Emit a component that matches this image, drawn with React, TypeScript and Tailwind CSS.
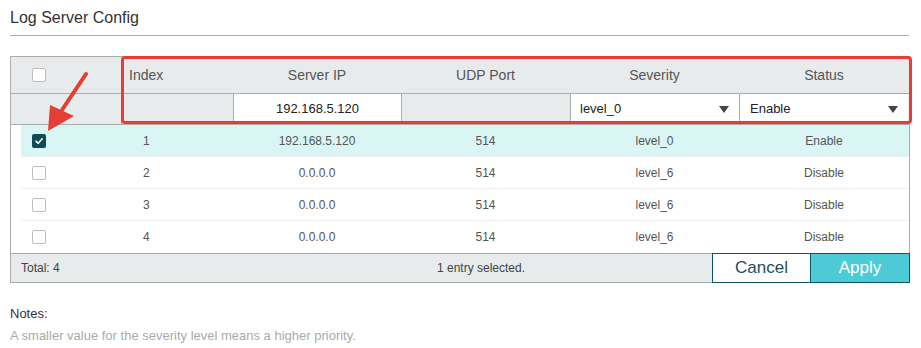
import React from "react";

const Check = ({ checked }: { checked?: boolean }) =>
  checked ? (
    <div className="w-[14px] h-[14px] rounded-[2px] bg-[#0e4a5a] flex items-center justify-center">
      <svg width="10" height="10" viewBox="0 0 10 10">
        <path d="M2 5.2 L4.2 7.3 L8.2 2.8" stroke="#fff" strokeWidth="1.6" fill="none" strokeLinecap="round" strokeLinejoin="round" />
      </svg>
    </div>
  ) : (
    <div className="w-[14px] h-[14px] rounded-[2px] border border-[#bdbdbd] bg-white" />
  );

const Tri = () => (
  <svg width="10" height="7" viewBox="0 0 10 7">
    <path d="M0 0 L10 0 L5 7 Z" fill="#444" />
  </svg>
);

const rows = [
  { i: "1", ip: "192.168.5.120", port: "514", sev: "level_0", st: "Enable", sel: true },
  { i: "2", ip: "0.0.0.0", port: "514", sev: "level_6", st: "Disable" },
  { i: "3", ip: "0.0.0.0", port: "514", sev: "level_6", st: "Disable" },
  { i: "4", ip: "0.0.0.0", port: "514", sev: "level_6", st: "Disable" },
];

export default function App() {
  return (
    <div className="relative w-[921px] h-[348px] bg-white font-['Liberation_Sans',Arial,sans-serif] overflow-hidden">
      <div className="ml-[10px] w-[899px] h-[36px] border-b border-[#acacac] flex items-center text-[16px] text-[#333]">
        Log Server Config
      </div>

      <div className="ml-[10px] mt-[20px] w-[900px] border-l border-r border-[#acacac]">
        {/* header */}
        <div className="border-t border-[#acacac] bg-[#e8ebec] text-[#555] text-[14px]">
          <div className="flex h-[37px] items-center border-b border-[#acacac]">
            <div className="w-[110px] pl-[21px] flex items-center">
              <Check />
            </div>
            <div className="w-[112px] pl-[8px]">Index</div>
            <div className="w-[168px] text-center">Server IP</div>
            <div className="w-[169px] text-center">UDP Port</div>
            <div className="w-[169px] text-center">Severity</div>
            <div className="w-[170px] text-center">Status</div>
          </div>
          <div className="flex h-[31px] border-b border-[#acacac] text-[13px] text-[#222]">
            <div className="w-[110px]" />
            <div className="w-[112px] border-l border-[#acacac]" />
            <div className="w-[168px] border-l border-[#acacac] bg-white flex items-center justify-center">192.168.5.120</div>
            <div className="w-[169px] border-l border-[#acacac]" />
            <div className="w-[169px] border-l border-[#acacac] bg-white flex items-center justify-between pl-[9px] pr-[10px]">
              <span>level_0</span>
              <Tri />
            </div>
            <div className="w-[169px] border-l border-[#acacac] bg-white flex items-center justify-between pl-[10px] pr-[10px]">
              <span>Enable</span>
              <Tri />
            </div>
          </div>
        </div>

        {/* rows */}
        <div className="pl-[10px] text-[12px] text-[#555]">
          {rows.map((r, k) => (
            <div
              key={k}
              className={`flex h-[32px] items-center ${k < 3 ? "border-b border-[#eeeeee]" : ""} ${r.sel ? "bg-[#d9f5f4]" : ""}`}
            >
              <div className="w-[100px] pl-[11px] flex items-center">
                <Check checked={r.sel} />
              </div>
              <div className="w-[112px] pl-[22px]">{r.i}</div>
              <div className="w-[168px] text-center">{r.ip}</div>
              <div className="w-[169px] text-center">{r.port}</div>
              <div className="w-[169px] text-center">{r.sev}</div>
              <div className="w-[170px] text-center">{r.st}</div>
            </div>
          ))}
        </div>

        {/* footer */}
        <div className="flex h-[30px] border-t border-b border-[#acacac] bg-[#e8ebec] text-[12px] text-[#444]">
          <div className="flex-1 flex items-center pl-[10px]">
            <span className="w-[416px]">Total: 4</span>
            <span>1 entry selected.</span>
          </div>
          <div className="w-[99px] -my-[1px] border border-[#0f5566] bg-white flex items-center justify-center text-[17px] text-[#1f4e5a]">
            Cancel
          </div>
          <div className="w-[99px] -my-[1px] -mr-[1px] border border-l-0 border-[#0f5566] bg-[#4ccbd6] flex items-center justify-center text-[17px] text-white">
            Apply
          </div>
        </div>
      </div>

      <div className="mt-[23px] ml-[10px] text-[13px] leading-[16px] text-[#333]">Notes:</div>
      <div className="mt-[6px] ml-[10px] text-[13px] leading-[16px] text-[#aaa]">
        A smaller value for the severity level means a higher priority.
      </div>

      {/* annotation overlay */}
      <div className="absolute left-[121px] top-[56px] w-[791px] h-[68px] border-[3px] border-[#e53e35] rounded-[4px]" />
      <svg className="absolute left-0 top-0" width="921" height="348" viewBox="0 0 921 348">
        <line x1="86" y1="74" x2="62" y2="110" stroke="#e53e35" strokeWidth="4" strokeLinecap="round" />
        <path d="M48 131 L50 105 L74 116 Z" fill="#e53e35" />
      </svg>
    </div>
  );
}
